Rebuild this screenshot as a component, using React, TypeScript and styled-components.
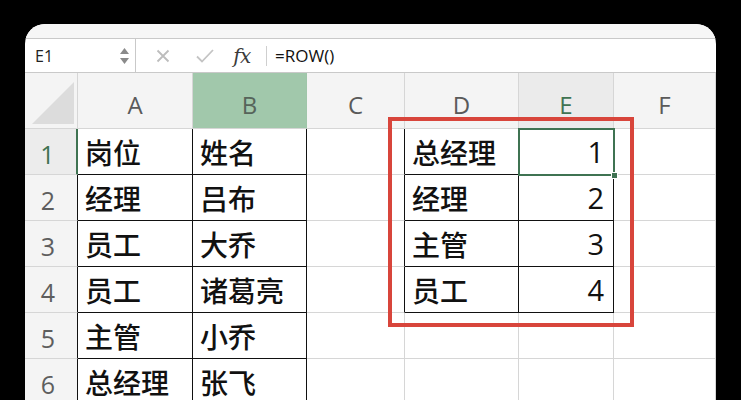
import React from "react";
import styled, { createGlobalStyle, css } from "styled-components";

const Global = createGlobalStyle`
  html, body { margin: 0; padding: 0; background: #000; overflow: hidden; }
  body { width: 741px; height: 400px; }
`;

const GRID = "#d6d6d6";
const GREEN = "#3f7352";
const CJK = `"Noto Sans CJK SC", "Noto Sans", sans-serif`;
const UI = `"Open Sans", "Noto Sans", sans-serif`;

const Window = styled.div`
  margin: 24px 0 0 25px;
  width: 691px;
  height: 376px;
  background: #fff;
  border-radius: 20px 20px 0 0;
  overflow: hidden;
  display: flex;
  flex-direction: column;
`;

const TopStrip = styled.div`
  height: 14px;
  flex: none;
  background: #f6f6f6;
  border-bottom: 1px solid #c9c9c9;
`;

const FormulaBar = styled.div`
  height: 33px;
  flex: none;
  display: flex;
  align-items: center;
  border-bottom: 1px solid #c9c9c9;
  font-family: ${UI};
`;

const NameBox = styled.div`
  width: 111px;
  height: 100%;
  border-right: 1px solid #c9c9c9;
  display: flex;
  align-items: center;
  justify-content: space-between;
  padding: 0 6px 0 10px;
  box-sizing: border-box;
  font-size: 16px;
  color: #222;
`;

const Spinner = styled.div`
  display: flex;
  flex-direction: column;
  gap: 4px;
`;

const Tools = styled.div`
  display: flex;
  align-items: center;
  height: 100%;
`;

const ToolIcon = styled.div<{ $w: number }>`
  width: ${(p) => p.$w}px;
  display: flex;
  justify-content: center;
  align-items: center;
`;

const Fx = styled.span`
  font-family: "DejaVu Serif", "Liberation Serif", serif;
  font-style: italic;
  font-size: 20px;
  color: #3a3a3a;
  letter-spacing: -0.5px;
`;

const Divider = styled.div`
  width: 1px;
  height: 20px;
  background: #cfcfcf;
  margin: 0 8px 0 2px;
`;

const Formula = styled.span`
  font-size: 17px;
  color: #111;
`;

const SheetWrap = styled.div`
  position: relative;
  flex: 1;
  overflow: hidden;
`;

const Sheet = styled.div`
  display: grid;
  grid-template-columns: 53px 115px 114px 98px 114px 95px 102px;
  grid-template-rows: 56px repeat(6, 46px);
`;

type Edge = "grid" | "black" | "green";
const edgeColor = (e: Edge) => (e === "black" ? "#111" : e === "green" ? GREEN : GRID);

const Cell = styled.div<{ $right?: Edge; $bottom?: Edge; $num?: boolean; $selected?: boolean }>`
  box-sizing: border-box;
  border-right: 1px solid ${(p) => edgeColor(p.$right ?? "grid")};
  border-bottom: 1px solid ${(p) => edgeColor(p.$bottom ?? "grid")};
  display: flex;
  align-items: center;
  justify-content: ${(p) => (p.$num ? "flex-end" : "flex-start")};
  padding: ${(p) => (p.$num ? "0 9px 0 0" : "0 0 0 7px")};
  font-family: ${(p) => (p.$num ? UI : CJK)};
  font-size: ${(p) => (p.$num ? "29px" : "28px")};
  font-weight: ${(p) => (p.$num ? 400 : 500)};
  color: #111;
  background: #fff;
  position: relative;
  ${(p) =>
    p.$selected &&
    css`
      outline: 2px solid ${GREEN};
      outline-offset: -1px;
      z-index: 2;
    `}
`;

const Handle = styled.div`
  position: absolute;
  right: -5px;
  bottom: -5px;
  width: 7px;
  height: 7px;
  background: ${GREEN};
  border: 1px solid #fff;
  box-sizing: border-box;
`;

const ColHead = styled.div<{ $variant?: "normal" | "green" | "active" }>`
  box-sizing: border-box;
  border-right: 1px solid ${(p) => (p.$variant === "green" ? "#9fc6a9" : GRID)};
  border-bottom: 1px solid ${GRID};
  display: flex;
  align-items: center;
  justify-content: center;
  padding-top: 8px;
  font-family: ${UI};
  font-size: 24px;
  color: ${(p) => (p.$variant === "active" ? GREEN : p.$variant === "green" ? "#56645a" : "#5a5a5a")};
  background: ${(p) =>
    p.$variant === "green" ? "#a1c8ab" : p.$variant === "active" ? "#ebebeb" : "#f4f4f4"};
`;

const Corner = styled.div`
  box-sizing: border-box;
  border-right: 1px solid ${GRID};
  border-bottom: 1px solid ${GRID};
  background: #f4f4f4;
  display: flex;
  align-items: flex-end;
  justify-content: flex-end;
  padding: 0 3px 4px 0;
`;

const RowHead = styled.div<{ $active?: boolean; $right: Edge }>`
  box-sizing: border-box;
  border-right: ${(p) => (p.$active ? "2px" : "1px")} solid ${(p) => edgeColor(p.$right)};
  border-bottom: 1px solid ${GRID};
  display: flex;
  align-items: flex-end;
  justify-content: center;
  padding: 0 6px 3px 0;
  font-family: ${UI};
  font-size: 25px;
  color: ${(p) => (p.$active ? GREEN : "#5e5e5e")};
  background: ${(p) => (p.$active ? "#ececec" : "#f4f4f4")};
`;

const RedBox = styled.div`
  position: absolute;
  left: 363px;
  top: 44px;
  width: 246px;
  height: 210px;
  border: 4px solid #d8453b;
  box-sizing: border-box;
  pointer-events: none;
  z-index: 3;
`;

const colA = ["岗位", "经理", "员工", "员工", "主管", "总经理"];
const colB = ["姓名", "吕布", "大乔", "诸葛亮", "小乔", "张飞"];
const colD = ["总经理", "经理", "主管", "员工"];
const colE = ["1", "2", "3", "4"];

const headers: { l: string; v: "normal" | "green" | "active" }[] = [
  { l: "A", v: "normal" },
  { l: "B", v: "green" },
  { l: "C", v: "normal" },
  { l: "D", v: "normal" },
  { l: "E", v: "active" },
  { l: "F", v: "normal" },
];

export default function App() {
  return (
    <>
      <Global />
      <Window>
        <TopStrip />
        <FormulaBar>
          <NameBox>
            <span>E1</span>
            <Spinner>
              <svg width="9" height="6" viewBox="0 0 9 6"><path d="M4.5 0 L9 6 L0 6 Z" fill="#8a8a8a" /></svg>
              <svg width="9" height="6" viewBox="0 0 9 6"><path d="M0 0 L9 0 L4.5 6 Z" fill="#8a8a8a" /></svg>
            </Spinner>
          </NameBox>
          <Tools>
            <ToolIcon $w={54}>
              <svg width="14" height="14" viewBox="0 0 14 14">
                <path d="M1.5 1.5 L12.5 12.5 M12.5 1.5 L1.5 12.5" stroke="#bdbdbd" strokeWidth="1.8" />
              </svg>
            </ToolIcon>
            <ToolIcon $w={30}>
              <svg width="18" height="14" viewBox="0 0 18 14">
                <path d="M1 7.5 L6 12.5 L17 1" stroke="#c4c4c4" strokeWidth="1.8" fill="none" />
              </svg>
            </ToolIcon>
            <ToolIcon $w={44}>
              <Fx>fx</Fx>
            </ToolIcon>
          </Tools>
          <Divider />
          <Formula>=ROW()</Formula>
        </FormulaBar>
        <SheetWrap>
          <Sheet>
            <Corner>
              <svg width="42" height="42" viewBox="0 0 42 42">
                <path d="M42 0 L42 42 L0 42 Z" fill="#dcdcdc" />
              </svg>
            </Corner>
            {headers.map((h) => (
              <ColHead key={h.l} $variant={h.v}>
                {h.l}
              </ColHead>
            ))}
            {colA.map((a, i) => {
              const inD = i < 4;
              return (
                <React.Fragment key={i}>
                  <RowHead $active={i === 0} $right={i === 0 ? "green" : "black"}>
                    {i + 1}
                  </RowHead>
                  <Cell $right="black" $bottom="black">{a}</Cell>
                  <Cell $right="black" $bottom="black">{colB[i]}</Cell>
                  <Cell $right={inD ? "black" : "grid"} />
                  <Cell $right={inD ? "black" : "grid"} $bottom={inD ? "black" : "grid"}>
                    {inD ? colD[i] : ""}
                  </Cell>
                  <Cell
                    $num
                    $right={inD ? "black" : "grid"}
                    $bottom={inD ? "black" : "grid"}
                    $selected={i === 0}
                  >
                    {inD ? colE[i] : ""}
                    {i === 0 && <Handle />}
                  </Cell>
                  <Cell />
                </React.Fragment>
              );
            })}
          </Sheet>
          <RedBox />
        </SheetWrap>
      </Window>
    </>
  );
}
